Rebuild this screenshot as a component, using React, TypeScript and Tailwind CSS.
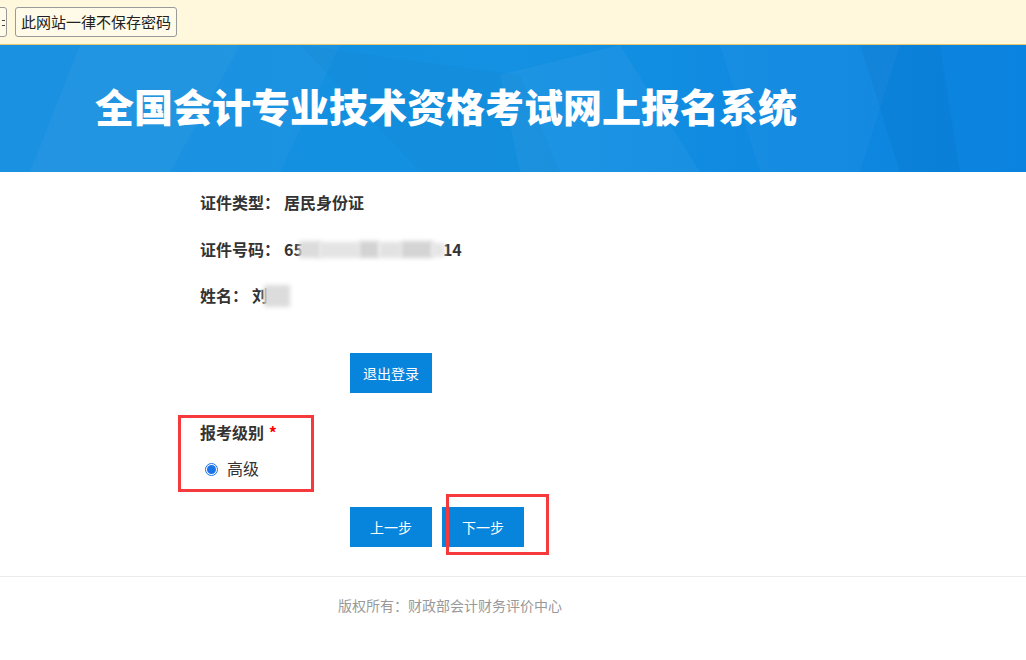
import React from "react";

const font = { fontFamily: '"Noto Sans CJK SC", "Noto Sans", sans-serif' };

export default function App() {
  return (
    <div className="w-[1026px] h-[660px] bg-white overflow-hidden relative" style={font}>
      {/* browser password bar */}
      <div className="h-[45px] bg-[#fff8dc] border-b border-[#e8c770] flex items-center relative">
        <div className="absolute left-[-10px] top-[7px] w-[17px] h-[30px] border border-[#9a9a9a] rounded-[3px] bg-[#fffbe8]">
          <span className="absolute right-[1px] top-[12px] w-[3px] h-[1px] bg-[#444]" />
          <span className="absolute right-[1px] top-[17px] w-[3px] h-[1px] bg-[#444]" />
        </div>
        <div className="ml-[15px] h-[30px] px-[5px] border border-[#9a9a9a] rounded-[3px] bg-[#fffbe8] text-[15px] leading-[28px] text-[#222]">
          此网站一律不保存密码
        </div>
      </div>

      {/* banner */}
      <div className="h-[127px] relative overflow-hidden bg-gradient-to-r from-[#148ee0] via-[#1491e2] to-[#0a82df]">
        <svg className="absolute inset-0" width="1026" height="127" viewBox="0 0 1026 127">
          <polygon points="0,0 240,0 170,127 0,127" fill="#ffffff" opacity="0.03" />
          <polygon points="80,0 340,0 280,127 30,127" fill="#ffffff" opacity="0.03" />
          <polygon points="500,30 620,0 700,127 520,127" fill="#ffffff" opacity="0.04" />
          <polygon points="300,0 520,30 560,127 420,127" fill="#000000" opacity="0.02" />
          <polygon points="720,0 900,0 860,127 760,127" fill="#ffffff" opacity="0.03" />
          <polygon points="860,0 940,0 960,127 900,127" fill="#000000" opacity="0.03" />
        </svg>
        <div className="absolute left-[95px] top-[32px] text-[39px] leading-[56px] font-black text-white whitespace-nowrap">
          全国会计专业技术资格考试网上报名系统
        </div>
      </div>

      {/* info */}
      <div className="pl-[200px] pt-[18px] text-[16px] font-bold text-[#333]">
        <div className="h-[24px] leading-[24px] flex">
          <span>证件类型：</span>
          <span className="ml-[4px]">居民身份证</span>
        </div>
        <div className="mt-[23px] h-[24px] leading-[24px] flex items-center">
          <span>证件号码：</span>
          <span className="ml-[4px]">65</span>
          <span className="relative inline-block w-[150px] h-[24px] -ml-[4px]">
            <span className="absolute left-[0px] top-[4px] w-[22px] h-[17px] bg-[#dcdcdc] blur-[2px]" />
            <span className="absolute left-[20px] top-[5px] w-[40px] h-[16px] bg-[#e4e4e4] blur-[2px]" />
            <span className="absolute left-[60px] top-[4px] w-[20px] h-[17px] bg-[#d3d3d3] blur-[2px]" />
            <span className="absolute left-[80px] top-[5px] w-[22px] h-[16px] bg-[#e2e2e2] blur-[2px]" />
            <span className="absolute left-[102px] top-[4px] w-[32px] h-[17px] bg-[#d4d4d4] blur-[2px]" />
            <span className="absolute left-[132px] top-[6px] w-[14px] h-[14px] bg-[#e6e6e6] blur-[2px]" />
          </span>
          <span className="-ml-[6px]">14</span>
        </div>
        <div className="mt-[22px] h-[24px] leading-[24px] flex items-center">
          <span>姓名：</span>
          <span className="ml-[4px]">刘</span>
          <span className="relative inline-block w-[26px] h-[24px] -ml-[4px]">
            <span className="absolute left-[0px] top-[2px] w-[26px] h-[22px] bg-[#dcdcdc] blur-[2px]" />
          </span>
        </div>
      </div>

      {/* logout */}
      <div className="pl-[350px] mt-[46px]">
        <button className="w-[82px] h-[40px] bg-[#0784dc] text-white text-[14px]">退出登录</button>
      </div>

      {/* level */}
      <div className="relative mt-[22px] ml-[178px] w-[136px] h-[77px] border-[3px] border-[#f5393d]">
        <div className="absolute left-[19px] top-[2px] text-[16px] font-bold text-[#333] leading-[24px]">
          报考级别 <span className="text-[#f00] ml-[1px]">*</span>
        </div>
        <div className="absolute left-[24px] top-[38px] flex items-center">
          <span className="w-[13px] h-[13px] rounded-full border border-[#1a73e8] flex items-center justify-center bg-white mt-[3px]">
            <span className="w-[9px] h-[9px] rounded-full bg-[#1a73e8]" />
          </span>
          <span className="ml-[9px] text-[16px] text-[#333] leading-[24px]">高级</span>
        </div>
      </div>

      {/* step buttons */}
      <div className="pl-[350px] mt-[15px] flex gap-[10px] relative">
        <button className="w-[82px] h-[40px] bg-[#0784dc] text-white text-[14px]">上一步</button>
        <button className="w-[82px] h-[40px] bg-[#0784dc] text-white text-[14px]">下一步</button>
        <div className="absolute left-[446px] top-[-13px] w-[103px] h-[61px] border-[3px] border-[#f5393d]" />
      </div>

      {/* footer */}
      <div className="mt-[29px] border-t border-[#ececec]">
        <div className="pl-[338px] pt-[18px] text-[14px] text-[#999] leading-[20px]">版权所有：财政部会计财务评价中心</div>
      </div>
    </div>
  );
}
